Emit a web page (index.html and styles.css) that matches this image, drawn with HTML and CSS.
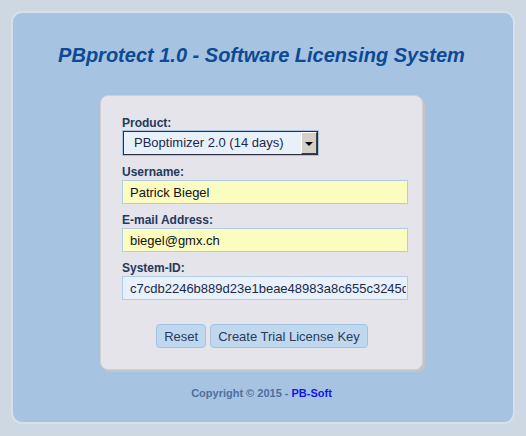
FILE: index.html
```html
<!DOCTYPE html>
<html>
<head>
<meta charset="utf-8">
<link rel="stylesheet" href="styles.css">
</head>
<body>
<div class="frame">
  <h1 class="title">PBprotect 1.0 - Software Licensing System</h1>
  <form class="card">
    <div class="field">
      <label class="label label-tight">Product:</label>
      <div class="select">
        <span class="select-text">PBoptimizer 2.0 (14 days)</span>
        <span class="select-btn"><span class="arrow"></span></span>
      </div>
    </div>
    <div class="field">
      <label class="label">Username:</label>
      <input class="input filled" type="text" value="Patrick Biegel">
    </div>
    <div class="field">
      <label class="label">E-mail Address:</label>
      <input class="input filled" type="text" value="biegel@gmx.ch">
    </div>
    <div class="field">
      <label class="label">System-ID:</label>
      <input class="input sysid" type="text" value="c7cdb2246b889d23e1beae48983a8c655c3245d">
    </div>
    <div class="buttons">
      <button type="button" class="btn">Reset</button>
      <button type="button" class="btn">Create Trial License Key</button>
    </div>
  </form>
  <p class="copyright">Copyright © 2015 - <a class="link">PB-Soft</a></p>
</div>
</body>
</html>
```
FILE: styles.css
```css
html, body {
  margin: 0;
  padding: 0;
}
body {
  background: #cdd8e2;
  font-family: "Liberation Sans", Arial, sans-serif;
  padding: 11px 11px 0 11px;
}
.frame {
  background: #a6c3e2;
  border: 2px solid #d6e0ea;
  border-radius: 11px;
  box-sizing: border-box;
  height: 413px;
  padding: 30px 3px 0 0;
}
.title {
  margin: 0;
  text-align: center;
  font-size: 20px;
  font-weight: bold;
  font-style: italic;
  color: #0d4a94;
  line-height: 24px;
}
.card {
  margin: 28px auto 0 auto;
  width: 286px;
  background: #e4e4ea;
  border: 1px solid #cfcfd4;
  border-radius: 8px;
  box-shadow: 2px 2px 0 #c4c4c9;
  padding: 20px 14px 21px 21px;
  box-sizing: content-box;
}
.field {
  margin-bottom: 9px;
}
.label {
  display: block;
  font-size: 12px;
  font-weight: bold;
  color: #1f3a5c;
  line-height: 14px;
  margin-bottom: 1px;
}
.label-tight {
  margin-bottom: 0;
}
.select {
  display: flex;
  width: 197px;
  height: 26px;
  box-sizing: border-box;
  border: 1px solid #a8c4e0;
  background: #e8f0fa;
  box-shadow: inset 1px 1px 0 #2c3040, inset -1px -1px 0 #2c3040;
  padding: 1px;
  margin-bottom: 4px;
}
.select-text {
  flex: 1;
  font-size: 13px;
  color: #1a2a4a;
  line-height: 22px;
  padding-left: 10px;
}
.select-btn {
  width: 16px;
  background: #d4d0c8;
  border-top: 1px solid #fff;
  border-left: 1px solid #fff;
  border-right: 1px solid #404040;
  border-bottom: 1px solid #404040;
  box-sizing: border-box;
  display: flex;
  align-items: center;
  justify-content: center;
}
.arrow {
  width: 0;
  height: 0;
  border-left: 4px solid transparent;
  border-right: 4px solid transparent;
  border-top: 4px solid #000;
  margin-top: 1px;
}
.input {
  display: block;
  width: 286px;
  height: 24px;
  box-sizing: border-box;
  border: 1px solid #b4cce4;
  font-family: "Liberation Sans", Arial, sans-serif;
  font-size: 13px;
  color: #111;
  padding: 0 7px;
  margin: 0;
  outline: none;
}
.filled {
  background: #fafcc0;
}
.sysid {
  background: #e8f0fa;
  color: #1a2a4a;
  padding-right: 1px;
}
.buttons {
  display: flex;
  justify-content: center;
  gap: 4px;
  margin-top: 24px;
  padding-right: 6px;
}
.btn {
  height: 24px;
  background: #c0d8ee;
  border: 1px solid #a4c2e0;
  border-radius: 4px;
  font-family: "Liberation Sans", Arial, sans-serif;
  font-size: 13px;
  color: #2a3a5a;
  padding: 0 7px;
}
.copyright {
  margin: 17px 0 0 0;
  text-align: center;
  font-size: 11px;
  font-weight: bold;
  color: #4f6f9c;
}
.link {
  color: #1414f0;
}
```
